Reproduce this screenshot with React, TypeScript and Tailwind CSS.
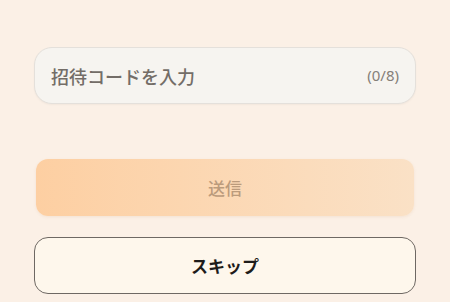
import React from "react";

export default function App() {
  return (
    <div
      className="w-[450px] h-[302px] bg-[#fbf0e6] overflow-hidden flex flex-col px-[34px] pt-[47px]"
      style={{ fontFamily: '"Noto Sans CJK JP", "Noto Sans", sans-serif' }}
    >
      <div className="h-[57px] rounded-[18px] bg-[#f6f4f0] border border-[#e4e0db] shadow-[0_1px_2px_rgba(0,0,0,0.04)] flex items-center justify-between pl-[16px] pr-[16px]">
        <span className="text-[18px] font-medium text-[#736d67] leading-none">招待コードを入力</span>
        <span className="text-[15px] text-[#857f79] leading-none" style={{ fontFamily: '"Noto Sans", sans-serif' }}>(0/8)</span>
      </div>
      <button className="mt-[55px] mx-[2px] h-[57px] rounded-[12px] bg-gradient-to-r from-[#fdcfa2] to-[#fae1c6] shadow-[0_1px_3px_rgba(200,150,100,0.15)] flex items-center justify-center">
        <span className="text-[17px] font-medium text-[#bb9b7c] leading-none">送信</span>
      </button>
      <button className="mt-[21px] h-[57px] rounded-[14px] bg-[#fef7ec] border-[1.5px] border-[#6e6863] flex items-center justify-center">
        <span className="text-[17px] font-bold text-[#1f1c1a] leading-none">スキップ</span>
      </button>
    </div>
  );
}
